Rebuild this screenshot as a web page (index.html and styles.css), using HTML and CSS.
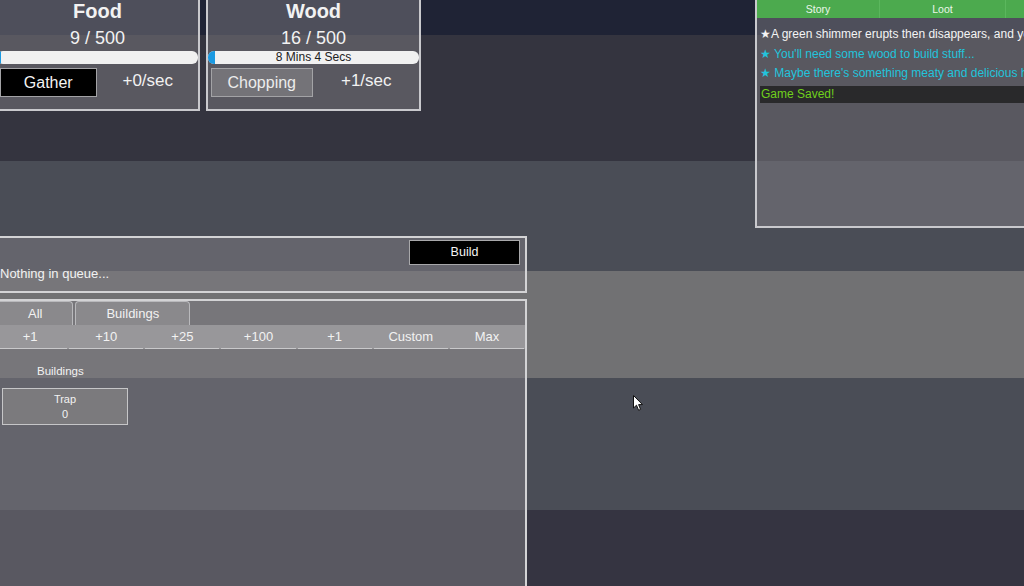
FILE: index.html
```html
<!DOCTYPE html>
<html lang="en">
<head>
<meta charset="utf-8">
<title>Trimps</title>
<link rel="stylesheet" href="styles.css">
</head>
<body>
<div class="page">
  <div class="top">
    <div class="resources">
      <div class="res res-food">
        <div class="res-title">Food</div>
        <div class="res-amt">9 / 500</div>
        <div class="bar"><div class="bar-fill" style="width:1.8%"></div><div class="bar-text"></div></div>
        <div class="res-row">
          <div class="half"><div class="btn btn-black">Gather</div></div>
          <div class="half rate">+0/sec</div>
        </div>
      </div>
      <div class="res res-wood">
        <div class="res-title">Wood</div>
        <div class="res-amt">16 / 500</div>
        <div class="bar"><div class="bar-fill" style="width:3.2%"></div><div class="bar-text">8 Mins 4 Secs</div></div>
        <div class="res-row">
          <div class="half"><div class="btn btn-grey">Chopping</div></div>
          <div class="half rate">+1/sec</div>
        </div>
      </div>
    </div>
    <div class="log">
      <div class="log-tabs">
        <div class="log-tab">Story</div>
        <div class="log-tab">Loot</div>
        <div class="log-tab">Unlocks</div>
      </div>
      <div class="log-body">
        <div class="log-line log-white">★A green shimmer erupts then disappears, and you hit the ground.</div>
        <div class="log-line log-cyan">★ You'll need some wood to build stuff...</div>
        <div class="log-line log-cyan">★ Maybe there's something meaty and delicious here to Gather.</div>
        <div class="log-saved">Game Saved!</div>
      </div>
    </div>
  </div>

  <div class="queue">
    <div class="btn-build">Build</div>
    <div class="queue-text">Nothing in queue...</div>
  </div>

  <div class="buildings">
    <div class="tabs">
      <div class="tab tab-first">All</div>
      <div class="tab">Buildings</div>
    </div>
    <div class="buy-row">
      <div class="buy-cell">+1</div>
      <div class="buy-cell">+10</div>
      <div class="buy-cell">+25</div>
      <div class="buy-cell">+100</div>
      <div class="buy-cell">+1</div>
      <div class="buy-cell">Custom</div>
      <div class="buy-cell">Max</div>
    </div>
    <div class="section-label">Buildings</div>
    <div class="thing">
      <div>Trap</div>
      <div>0</div>
    </div>
  </div>

  <svg class="cursor" width="11" height="17" viewBox="0 0 11 17"><path d="M0.5 0.5 L0.5 13 L3.5 10.2 L5.6 15.3 L7.6 14.4 L5.6 9.6 L9.5 9.6 Z" fill="#ffffff" stroke="#111111" stroke-width="1" stroke-linejoin="round"/></svg>
</div>
</body>
</html>
```

FILE: styles.css
```css
* { box-sizing: border-box; }

html, body {
  margin: 0;
  padding: 0;
}

body {
  width: 1024px;
  height: 586px;
  overflow: hidden;
  font-family: "Liberation Sans", Arial, sans-serif;
  color: #f2f2f2;
  background: linear-gradient(to bottom,
    #1f2335 0, #1f2335 35px,
    #34343f 35px, #34343f 161px,
    #4a4d56 161px, #4a4d56 271px,
    #717173 271px, #717173 378px,
    #4a4d56 378px, #4a4d56 510px,
    #353441 510px, #353441 586px);
}

.page {
  position: relative;
  width: 1024px;
  height: 586px;
  overflow: hidden;
}

/* top row */
.top {
  display: flex;
  align-items: flex-start;
  margin-top: -10px;
}

.resources {
  display: flex;
  gap: 6px;
  margin-left: -5px;
  flex-shrink: 0;
}

.res {
  flex-shrink: 0;
  border: 2px solid #c9c9cd;
  background: rgba(125, 124, 130, 0.5);
  padding: 7px 0 12px;
  text-align: center;
}

.res-food { width: 205px; }
.res-wood { width: 215px; }

.res-title {
  font-size: 20px;
  font-weight: bold;
  line-height: 24px;
}

.res-amt {
  margin-top: 4px;
  font-size: 18px;
  line-height: 22px;
}

.bar {
  display: grid;
  margin-top: 2px;
  height: 13px;
  background: #f1f1f1;
  border-radius: 6px;
  overflow: hidden;
}

.bar > * { grid-area: 1 / 1; }

.bar-fill {
  background: #1b9ae2;
  height: 13px;
}

.bar-text {
  font-size: 12px;
  line-height: 13px;
  color: #222;
  text-align: center;
}

.res-row {
  display: flex;
  margin-top: 4px;
  height: 29px;
}

.half {
  flex: 1 1 0;
}

.btn {
  margin-left: 3px;
  width: calc(100% - 4px);
  height: 29px;
  border: 1px solid #a3a3a6;
  font-size: 16px;
  line-height: 27px;
  text-align: center;
}

.btn-black { background: #000; color: #f4f4f4; }
.btn-grey { background: #747378; color: #ececec; }

.rate {
  font-size: 17px;
  line-height: 26px;
  text-align: center;
}

/* log */
.log {
  flex-shrink: 0;
  margin-left: 334px;
  width: 300px;
  height: 238px;
  border: 2px solid #c9c9cd;
  background: rgba(125, 124, 130, 0.5);
}

.log-tabs {
  display: flex;
  padding-top: 8px;
  background: #4caa4e;
}

.log-tab {
  width: 124px;
  flex-shrink: 0;
  font-size: 10.5px;
  line-height: 18px;
  text-align: center;
  color: #eaf6ea;
  border-right: 1px solid #5bb75d;
}

.log-tab:first-child { width: 123px; }
.log-tab:nth-child(2) { width: 126px; }

.log-body {
  padding: 7px 0 0 3px;
  white-space: nowrap;
  overflow: hidden;
}

.log-line {
  font-size: 12px;
  line-height: 19.5px;
}

.log-white { color: #f4f4f4; }
.log-cyan { color: #22c4dc; }

.log-saved {
  margin-top: 2px;
  height: 17px;
  background: #29292b;
  color: #6fd01c;
  font-size: 12px;
  line-height: 17px;
  padding-left: 1px;
}

/* queue */
.queue {
  margin: 8px 0 0 -10px;
  width: 537px;
  height: 57px;
  border: 2px solid #d3d3d5;
  background: rgba(125, 124, 130, 0.5);
}

.btn-build {
  margin: 2px 5px 0 auto;
  width: 111px;
  height: 25px;
  background: #000;
  border: 1px solid #a8a8aa;
  color: #f4f4f4;
  font-size: 12.5px;
  line-height: 23px;
  text-align: center;
}

.queue-text {
  padding-left: 8px;
  font-size: 13px;
  line-height: 17px;
}

/* buildings */
.buildings {
  margin: 6px 0 0 -10px;
  width: 537px;
  height: 320px;
  border: 2px solid #d3d3d5;
  background: rgba(125, 124, 130, 0.5);
}

.tabs {
  display: flex;
  height: 24px;
}

.tab {
  margin-left: 2px;
  padding: 0 30px;
  border: 1px solid #b9b9bc;
  border-bottom: none;
  border-radius: 4px 4px 0 0;
  background: #8a898c;
  font-size: 13px;
  line-height: 23px;
}

.tab-first { margin-left: 5px; }

.buy-row {
  display: flex;
  height: 24px;
  background: #98979a;
}

.buy-cell {
  flex: 1 1 0;
  margin: 0 1px;
  border-bottom: 1px solid #c9c9cb;
  font-size: 13px;
  line-height: 23px;
  text-align: center;
}

.section-label {
  margin-top: 14px;
  padding-left: 45px;
  font-size: 11.5px;
  line-height: 16px;
}

.thing {
  margin: 9px 0 0 10px;
  width: 126px;
  height: 37px;
  border: 1px solid #c6c6c8;
  background: #7b7a7d;
  padding-top: 3px;
  font-size: 11px;
  line-height: 15px;
  text-align: center;
}

.cursor {
  position: absolute;
  left: 633px;
  top: 395px;
}
```
